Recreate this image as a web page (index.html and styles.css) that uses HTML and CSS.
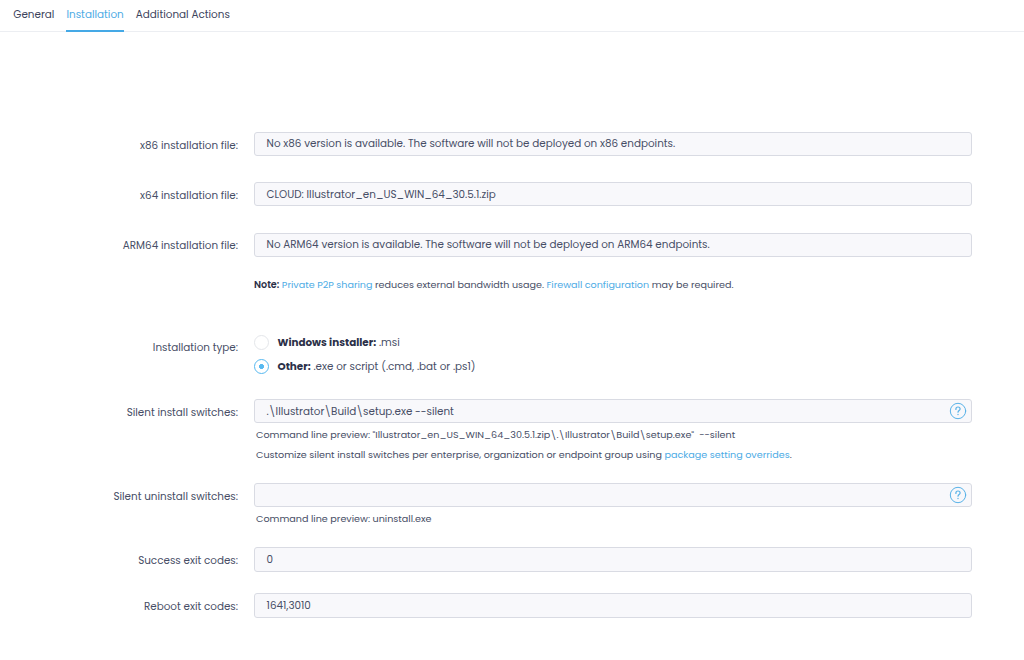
FILE: index.html
```html
<!DOCTYPE html>
<html lang="en">

<head>
    <meta charset="UTF-8">
    <meta name="viewport" content="width=device-width, initial-scale=1.0">
    <title>Installation</title>
    <link rel="stylesheet" href="styles.css">
</head>

<body>
    <nav class="tabs">
        <a class="tab">General</a>
        <a class="tab active">Installation</a>
        <a class="tab">Additional Actions</a>
    </nav>

    <main class="form">
        <div class="row row-file">
            <div class="label">x86 installation file:</div>
            <div class="field">No x86 version is available. The software will not be deployed on x86 endpoints.</div>
        </div>
        <div class="row row-file">
            <div class="label">x64 installation file:</div>
            <div class="field">CLOUD: Illustrator_en_US_WIN_64_30.5.1.zip</div>
        </div>
        <div class="row">
            <div class="label">ARM64 installation file:</div>
            <div class="field">No ARM64 version is available. The software will not be deployed on ARM64 endpoints.</div>
        </div>

        <p class="note"><b>Note:</b> <a>Private P2P sharing</a> reduces external bandwidth usage. <a>Firewall configuration</a> may be required.</p>

        <div class="row row-type">
            <div class="label">Installation type:</div>
            <div class="options">
                <div class="option"><i class="radio"></i><span><b>Windows installer:</b> .msi</span></div>
                <div class="option"><i class="radio checked"></i><span><b>Other:</b> .exe or script (.cmd, .bat or .ps1)</span></div>
            </div>
        </div>

        <div class="row row-silent">
            <div class="label">Silent install switches:</div>
            <div class="control">
                <div class="field">
                    <span>.\Illustrator\Build\setup.exe --silent</span>
                    <svg class="help" width="18" height="18" viewBox="0 0 18 18" fill="none" stroke="currentColor" stroke-linecap="round" stroke-linejoin="round">
                        <circle cx="9" cy="9" r="7.7" />
                        <path d="M6.9 7.4V6.9A2.1 1.9 0 0 1 11.1 6.9C11.1 8.4 9 8.5 9 10.2" stroke-width="1.2" />
                        <path d="M9 12.5V12.6" stroke-width="1.4" />
                    </svg>
                </div>
                <p class="hint">Command line preview: "Illustrator_en_US_WIN_64_30.5.1.zip\.\Illustrator\Build\setup.exe"&nbsp; --silent</p>
                <p class="hint">Customize silent install switches per enterprise, organization or endpoint group using <a>package setting overrides</a>.</p>
            </div>
        </div>

        <div class="row row-uninstall">
            <div class="label">Silent uninstall switches:</div>
            <div class="control">
                <div class="field">
                    <span></span>
                    <svg class="help" width="18" height="18" viewBox="0 0 18 18" fill="none" stroke="currentColor" stroke-linecap="round" stroke-linejoin="round">
                        <circle cx="9" cy="9" r="7.7" />
                        <path d="M6.9 7.4V6.9A2.1 1.9 0 0 1 11.1 6.9C11.1 8.4 9 8.5 9 10.2" stroke-width="1.2" />
                        <path d="M9 12.5V12.6" stroke-width="1.4" />
                    </svg>
                </div>
                <p class="hint">Command line preview: uninstall.exe</p>
            </div>
        </div>

        <div class="row row-success">
            <div class="label">Success exit codes:</div>
            <div class="field">0</div>
        </div>
        <div class="row row-reboot">
            <div class="label">Reboot exit codes:</div>
            <div class="field">1641,3010</div>
        </div>
    </main>
</body>

</html>
```

FILE: styles.css
```css
* {
    margin: 0;
    padding: 0;
    box-sizing: border-box;
}

body {
    font-family: Poppins, Inter, sans-serif;
    font-size: 10.39px;
    color: #474e66;
    background-color: #fff;
}

a {
    color: #4dabe5;
}

b {
    color: #2b3048;
    font-weight: 600;
}

/* Tabs */
.tabs {
    display: flex;
    gap: 12px;
    height: 32px;
    padding-left: 13.3px;
    font-size: 10.41px;
    border-bottom: 1px solid #eceef2;
}

.tab {
    height: 32px;
    line-height: 30px;
    color: #3c435c;
}

.tab.active {
    line-height: 29px;
    color: #4dabe5;
    border-bottom: 2px solid #45a9e6;
}

/* Form */
.form {
    padding: 100px 52.4px 0 0;
}

.row {
    display: grid;
    grid-template-columns: 238px 1fr;
    align-items: start;
    column-gap: 16px;
}

.row-file {
    margin-bottom: 25.4px;
}

.label {
    height: 25px;
    padding-top: 1.6px;
    line-height: 24px;
    text-align: right;
    white-space: nowrap;
}

.field {
    display: flex;
    justify-content: space-between;
    align-items: center;
    height: 24px;
    padding: 0.3px 4px 0 11.6px;
    background-color: #f8f8fb;
    border: 1px solid #d9dbe3;
    border-radius: 3px;
    white-space: nowrap;
}

.field span {
    padding-top: 1px;
}

.help {
    color: #58b2e8;
}

.note {
    margin: 17.2px 0 40px 254px;
    font-size: 9.59px;
    line-height: 20px;
    white-space: nowrap;
}

.option {
    display: flex;
    align-items: center;
    height: 24px;
    gap: 9px;
}

.option span {
    padding-top: 1px;
}

.option b {
    font-weight: 700;
}

.row-type {
    margin-top: -4px;
}

.row-type .label {
    padding-top: 4.6px;
}

.radio {
    width: 15px;
    height: 15px;
    margin-left: -0.5px;
    border: 1px solid #e4e6ea;
    border-radius: 50%;
}

.radio.checked {
    border: 1.5px solid #58b9f0;
    background: radial-gradient(circle, #58b9f0 2.2px, #fff 2.8px);
}

.row-silent {
    margin-top: 20px;
}

.hint {
    padding-left: 2px;
    font-size: 9.6px;
    line-height: 20px;
    white-space: nowrap;
}

.field + .hint {
    margin-top: 2px;
}

.row-uninstall {
    margin-top: 18px;
}

.row-success {
    margin: 18px 0 21px;
}

.row-success .field,
.row-reboot .field {
    height: 25px;
}

.row-success .field {
    padding-top: 1px;
}
```
